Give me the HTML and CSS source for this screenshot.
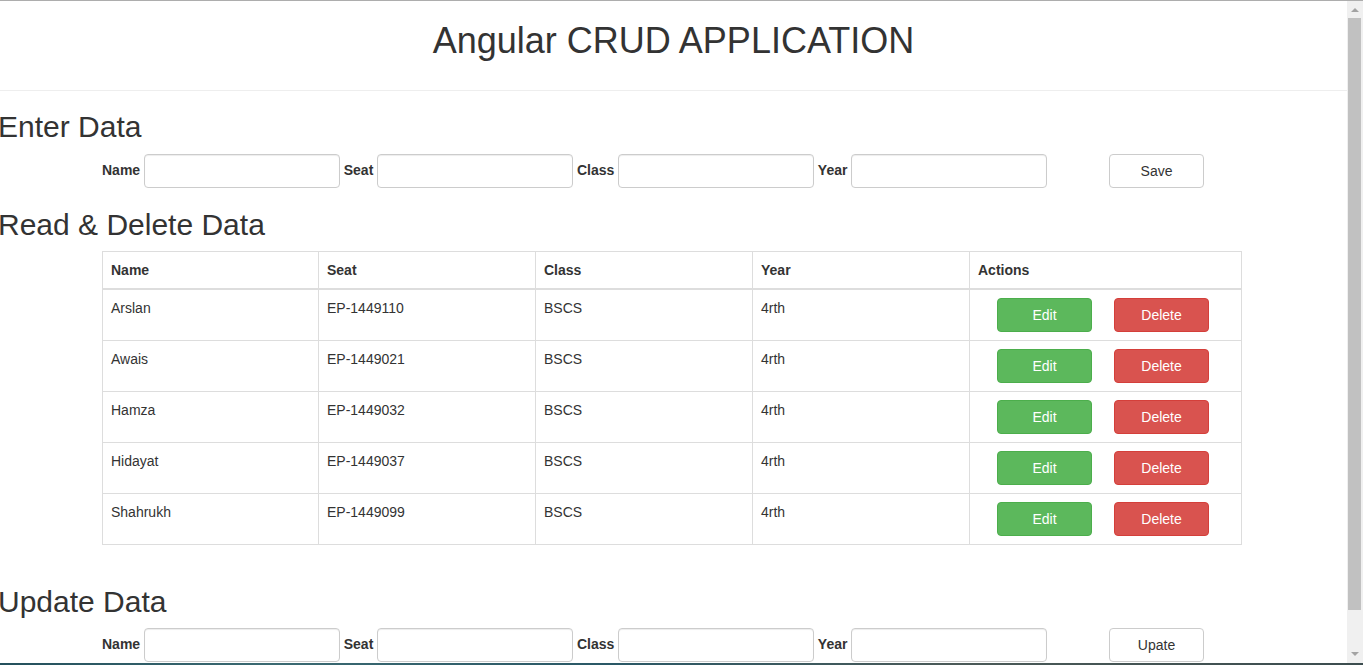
FILE: index.html
```html
<!DOCTYPE html>
<html lang="en">
<head>
<meta charset="utf-8">
<title>Angular CRUD APPLICATION</title>
<link rel="stylesheet" href="styles.css">
</head>
<body>
<div class="page">
  <header class="masthead">
    <h1>Angular CRUD APPLICATION</h1>
  </header>
  <hr class="rule">

  <section class="block block-enter">
    <h2 class="block-title">Enter Data</h2>
    <form class="entry">
      <label class="field-label">Name</label><input class="field" type="text">
      <label class="field-label">Seat</label><input class="field" type="text">
      <label class="field-label">Class</label><input class="field" type="text">
      <label class="field-label">Year</label><input class="field" type="text">
      <button class="btn btn-default" type="button">Save</button>
    </form>
  </section>

  <section class="block">
    <h2 class="block-title">Read &amp; Delete Data</h2>
    <table class="data">
      <thead>
        <tr><th class="c-first">Name</th><th class="c">Seat</th><th class="c">Class</th><th class="c">Year</th><th class="c-act">Actions</th></tr>
      </thead>
      <tbody>
        <tr><td>Arslan</td><td>EP-1449110</td><td>BSCS</td><td>4rth</td><td class="acts"><button class="btn btn-success" type="button">Edit</button><button class="btn btn-danger" type="button">Delete</button></td></tr>
        <tr><td>Awais</td><td>EP-1449021</td><td>BSCS</td><td>4rth</td><td class="acts"><button class="btn btn-success" type="button">Edit</button><button class="btn btn-danger" type="button">Delete</button></td></tr>
        <tr><td>Hamza</td><td>EP-1449032</td><td>BSCS</td><td>4rth</td><td class="acts"><button class="btn btn-success" type="button">Edit</button><button class="btn btn-danger" type="button">Delete</button></td></tr>
        <tr><td>Hidayat</td><td>EP-1449037</td><td>BSCS</td><td>4rth</td><td class="acts"><button class="btn btn-success" type="button">Edit</button><button class="btn btn-danger" type="button">Delete</button></td></tr>
        <tr><td>Shahrukh</td><td>EP-1449099</td><td>BSCS</td><td>4rth</td><td class="acts"><button class="btn btn-success" type="button">Edit</button><button class="btn btn-danger" type="button">Delete</button></td></tr>
      </tbody>
    </table>
  </section>

  <section class="block">
    <h2 class="block-title">Update Data</h2>
    <form class="entry">
      <label class="field-label">Name</label><input class="field" type="text">
      <label class="field-label">Seat</label><input class="field" type="text">
      <label class="field-label">Class</label><input class="field" type="text">
      <label class="field-label">Year</label><input class="field" type="text">
      <button class="btn btn-default" type="button">Upate</button>
    </form>
  </section>
</div>

<div class="scrollbar" aria-hidden="true">
  <span class="arrow arrow-up"></span>
  <span class="thumb"></span>
  <span class="arrow arrow-down"></span>
</div>
<div class="desktop-strip" aria-hidden="true"></div>
</body>
</html>
```
FILE: styles.css
```css
* { box-sizing: border-box; }

html, body {
  margin: 0;
  padding: 0;
  overflow: hidden;
  background: #fff;
}

body {
  font-family: "Liberation Sans", Arial, Helvetica, sans-serif;
  font-size: 14px;
  line-height: 1.42857;
  color: #333;
  border-top: 1px solid #adadad;
}

.page {
  width: 1347px;
}

.masthead h1 {
  margin: 20px 0 29px;
  font-size: 36px;
  font-weight: 400;
  line-height: 1.1;
  text-align: center;
}

.rule {
  margin: 0;
  border: 0;
  border-top: 1px solid #eee;
}

.block-title {
  margin: 20px 0 10px -2px;
  font-size: 30px;
  font-weight: 400;
  line-height: 1.1;
}

.block-enter .block-title {
  margin-top: 19px;
  margin-bottom: 11px;
}

.entry {
  display: flex;
  align-items: center;
  gap: 3.8px;
  margin: 0 0 0 102px;
}

.field-label {
  font-weight: 700;
}

.field {
  width: 196px;
  height: 34px;
  padding: 6px 12px;
  font: inherit;
  color: #555;
  background: #fff;
  border: 1px solid #ccc;
  border-radius: 4px;
  box-shadow: inset 0 1px 1px rgba(0, 0, 0, .075);
}

.btn {
  width: 95px;
  height: 34px;
  padding: 6px 12px;
  font-family: inherit;
  font-size: 14px;
  line-height: 20px;
  text-align: center;
  border: 1px solid transparent;
  border-radius: 4px;
  cursor: pointer;
}

.btn-default {
  margin-left: 58px;
  color: #333;
  background: #fff;
  border-color: #ccc;
}

.btn-success {
  color: #fff;
  background: #5cb85c;
  border-color: #4cae4c;
}

.btn-danger {
  color: #fff;
  background: #d9534f;
  border-color: #d43f3a;
}

.data {
  width: 1139px;
  margin: 0 0 40px 102px;
  border-collapse: collapse;
  border-spacing: 0;
  table-layout: fixed;
  border: 1px solid #ddd;
}

.data th,
.data td {
  padding: 8px;
  line-height: 20px;
  text-align: left;
  vertical-align: top;
  border: 1px solid #ddd;
}

.data th {
  font-weight: 700;
  vertical-align: bottom;
  border-bottom: 2px solid #ddd;
}

.data .c-first { width: 216px; }
.data .c { width: 217px; }
.data .c-act { width: 272px; }

.data td.acts {
  padding-left: 27px;
}

.acts .btn-danger {
  margin-left: 22px;
}

.acts .btn {
  vertical-align: top;
}

/* imitation of the browser window's scrollbar, drawn over the page edge */
.scrollbar {
  position: fixed;
  top: 1px;
  right: 0;
  width: 16px;
  height: 662px;
  background: #f0f0f0;
}

.thumb {
  position: absolute;
  top: 17px;
  left: 1px;
  width: 13px;
  height: 592px;
  background: #c1c1c1;
}

.arrow {
  position: absolute;
  left: 4px;
  width: 0;
  height: 0;
  border-left: 4px solid transparent;
  border-right: 4px solid transparent;
}

.arrow-up {
  top: 7px;
  border-bottom: 4px solid #a3a3a3;
}

.arrow-down {
  top: 651px;
  border-top: 4px solid #a3a3a3;
}

.desktop-strip {
  position: fixed;
  left: 0;
  right: 0;
  bottom: 0;
  height: 2px;
  background: linear-gradient(90deg, #24505c 0%, #3b6a72 20%, #2a5866 45%, #4b5a58 70%, #3c4d4f 100%);
}
```
